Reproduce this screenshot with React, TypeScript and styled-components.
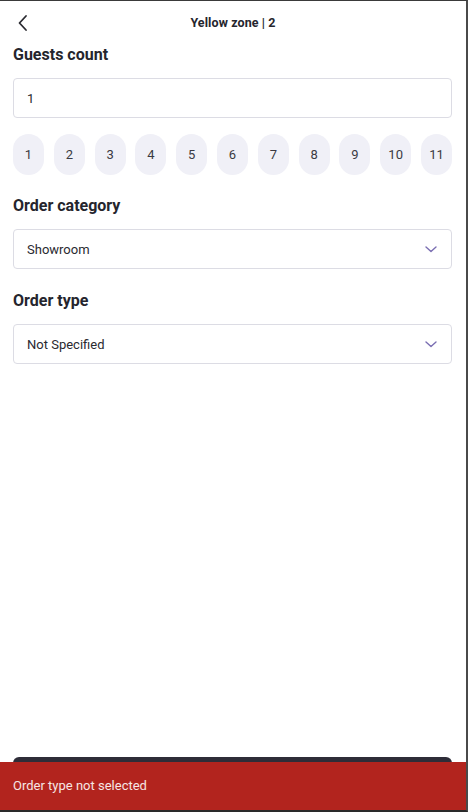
import React from "react";
import styled, { createGlobalStyle } from "styled-components";

const Global = createGlobalStyle`
  html, body { margin: 0; padding: 0; background: #ffffff; }
  body { font-family: Roboto, "Liberation Sans", sans-serif; }
  * { box-sizing: border-box; }
`;

const Frame = styled.div`
  position: relative;
  width: 468px;
  height: 812px;
  background: #ffffff;
  border-top: 1px solid #3a3a3a;
  border-right: 2px solid #4a4a4a;
  border-bottom: 2px solid #2a2a2a;
  display: flex;
  flex-direction: column;
  overflow: hidden;
  color: #25252d;
`;

const Header = styled.header`
  position: relative;
  height: 43px;
  display: flex;
  align-items: center;
  justify-content: center;
  flex-shrink: 0;
`;

const BackButton = styled.button`
  position: absolute;
  left: 13px;
  top: 11px;
  width: 20px;
  height: 22px;
  padding: 0;
  border: 0;
  background: transparent;
  display: flex;
  align-items: center;
  justify-content: center;
`;

const Title = styled.h1`
  margin: 0;
  font-size: 12.5px;
  font-weight: 700;
  color: #25252d;
  letter-spacing: 0.1px;
`;

const Content = styled.main`
  flex: 1;
  display: flex;
  flex-direction: column;
  padding: 0 14px 0 13px;
`;

const Section = styled.section<{ $gap?: number }>`
  display: flex;
  flex-direction: column;
  margin-bottom: ${(p) => p.$gap ?? 0}px;
`;

const Label = styled.h2`
  margin: 0;
  height: 24px;
  line-height: 22px;
  font-size: 16px;
  font-weight: 700;
  color: #25252d;
  margin-bottom: 10px;
`;

const Field = styled.div`
  height: 40px;
  border: 1px solid #dcdce4;
  border-radius: 4px;
  display: flex;
  align-items: center;
  justify-content: space-between;
  padding: 0 13px 0 13px;
  font-size: 13px;
  color: #2a2a30;
`;

const Chips = styled.div`
  display: flex;
  justify-content: space-between;
  margin-top: 16px;
`;

const Chip = styled.button`
  width: 31px;
  height: 41px;
  border: 0;
  border-radius: 16px;
  background: #f0f0f7;
  padding: 0;
  font-family: Roboto, "Liberation Sans", sans-serif;
  font-size: 13px;
  color: #3a3a42;
  display: flex;
  align-items: center;
  justify-content: center;
`;

const Footer = styled.div`
  padding: 0 14px 0 13px;
  flex-shrink: 0;
`;

const PrimaryButton = styled.button`
  width: 100%;
  height: 48px;
  border: 0;
  border-radius: 6px;
  background: #2e2d38;
  margin-bottom: 5px;
`;

const Snackbar = styled.div`
  position: absolute;
  left: 0;
  right: 0;
  bottom: 0;
  height: 48px;
  background: #b2241e;
  color: #f6e6e4;
  font-size: 13px;
  display: flex;
  align-items: center;
  padding-left: 13px;
  padding-bottom: 1px;
`;

const Chevron = () => (
  <svg width="14" height="10" viewBox="0 0 14 10" fill="none">
    <path d="M2 3 L7 7.5 L12 3" stroke="#7a6eb2" strokeWidth="1.4" strokeLinecap="round" strokeLinejoin="round" />
  </svg>
);

const Select = ({ value }: { value: string }) => (
  <Field>
    <span>{value}</span>
    <Chevron />
  </Field>
);

export default function App() {
  const counts = Array.from({ length: 11 }, (_, i) => i + 1);
  return (
    <>
      <Global />
      <Frame>
        <Header>
          <BackButton aria-label="Back">
            <svg width="12" height="18" viewBox="0 0 12 18" fill="none">
              <path d="M9 2 L2.5 9 L9 16" stroke="#2a2a30" strokeWidth="1.8" strokeLinecap="round" strokeLinejoin="round" />
            </svg>
          </BackButton>
          <Title>Yellow zone | 2</Title>
        </Header>
        <Content>
          <Section $gap={20}>
            <Label>Guests count</Label>
            <Field>1</Field>
            <Chips>
              {counts.map((n) => (
                <Chip key={n}>{n}</Chip>
              ))}
            </Chips>
          </Section>
          <Section $gap={21}>
            <Label>Order category</Label>
            <Select value="Showroom" />
          </Section>
          <Section>
            <Label>Order type</Label>
            <Select value="Not Specified" />
          </Section>
        </Content>
        <Footer>
          <PrimaryButton />
        </Footer>
        <Snackbar>Order type not selected</Snackbar>
      </Frame>
    </>
  );
}
